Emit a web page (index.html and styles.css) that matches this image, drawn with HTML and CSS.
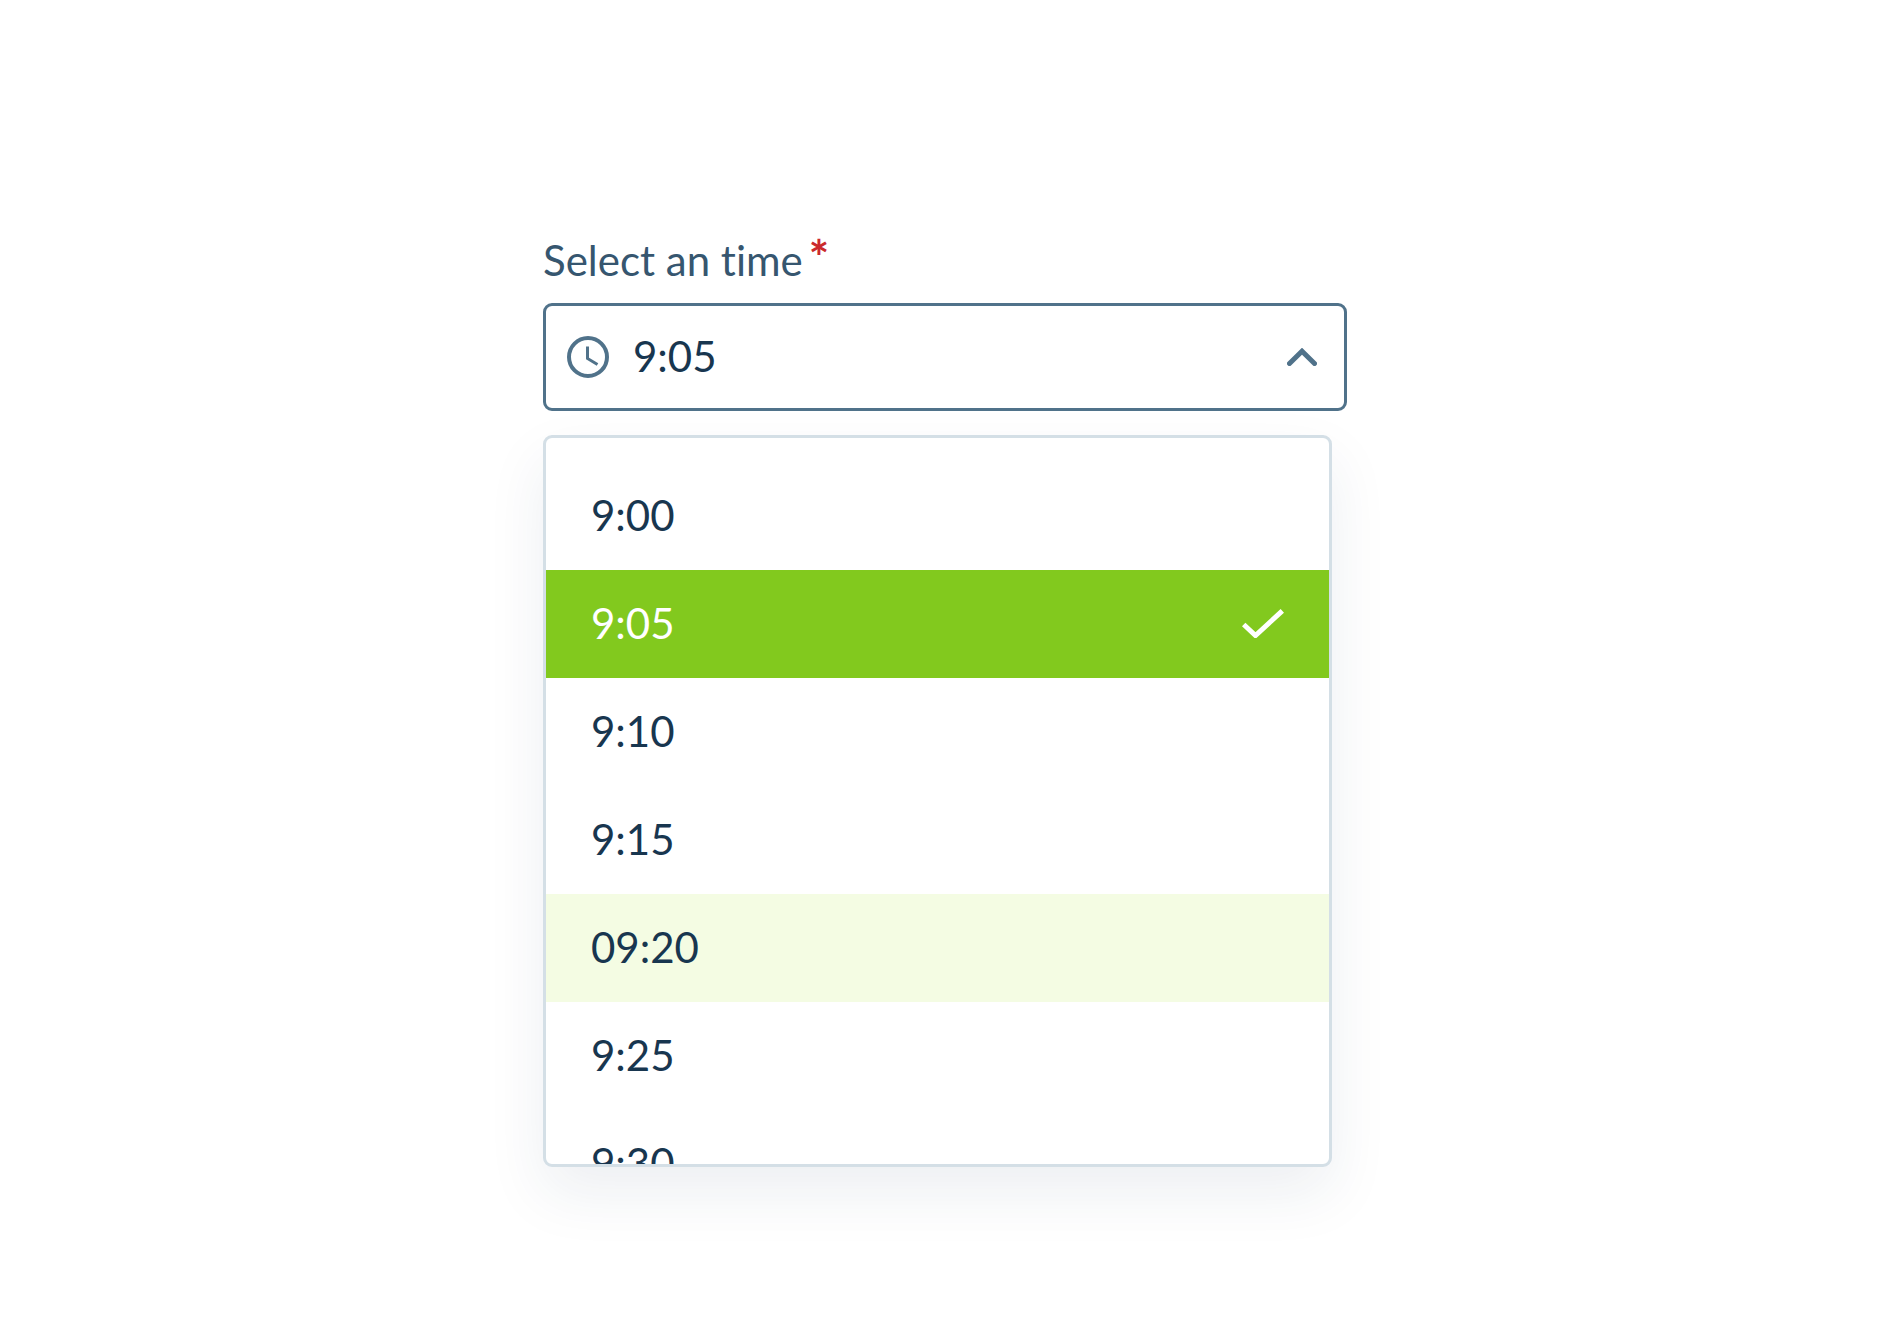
FILE: index.html
```html
<!DOCTYPE html>
<html lang="en">
<head>
<meta charset="utf-8">
<meta name="viewport" content="width=device-width, initial-scale=1">
<title>Time select</title>
<link rel="stylesheet" href="styles.css">
</head>
<body>
<main class="time-select">
  <label class="label" for="time">Select an time <span class="required">*</span></label>
  <div class="field">
    <svg class="clock" viewBox="0 0 42 42" aria-hidden="true">
      <circle cx="21" cy="21" r="19"/>
      <path class="hands" d="M20.500 10.500V22.500L30.500 28.500"/>
    </svg>
    <input class="value" id="time" type="text" value="9:05" role="combobox" aria-expanded="true" aria-controls="times" required>
    <button class="toggle" type="button" aria-label="Close list">
      <svg class="chevron" viewBox="0 0 30 18" aria-hidden="true"><path d="M2.500 15.500L15 3.200L27.500 15.500"/></svg>
    </button>
  </div>
  <div class="list" id="times" role="listbox" aria-label="Times">
    <button class="option" type="button" role="option">9:00</button>
    <button class="option selected" type="button" role="option" aria-selected="true">9:05
      <svg class="check" viewBox="0 0 42 30" aria-hidden="true"><path d="M1.700 16.500L13.500 27.500L40.300 2.900"/></svg>
    </button>
    <button class="option" type="button" role="option">9:10</button>
    <button class="option" type="button" role="option">9:15</button>
    <button class="option active" type="button" role="option">09:20</button>
    <button class="option" type="button" role="option">9:25</button>
    <button class="option" type="button" role="option">9:30</button>
  </div>
</main>
</body>
</html>
```
FILE: styles.css
```css
* {
  box-sizing: border-box;
}

body {
  margin: 0;
  background: #fff;
  color: #18364f;
  font-family: Lato, sans-serif;
  font-size: 42px;
  font-variant-ligatures: none;
  line-height: 54px;
}

button,
input {
  margin: 0;
  padding: 0;
  border: 0;
  background: none;
  color: inherit;
  font: inherit;
  font-variant-ligatures: none;
}

button {
  cursor: pointer;
}

svg {
  display: block;
  flex: none;
  fill: none;
}

.time-select {
  display: flex;
  flex-direction: column;
  max-width: 804px;
  margin: 0 auto;
  padding: 233px 0 96px;
}

.label {
  display: flex;
  gap: 6px;
  margin-bottom: 16px;
  color: #36566f;
}

.required {
  color: #cb2a2c;
  font-size: 48px;
  font-weight: 700;
  line-height: 48px;
}

.field {
  display: flex;
  align-items: center;
  height: 108px;
  padding: 0 27px 0 21px;
  border: 3px solid #50728a;
  border-radius: 9px;
  background: #fff;
}

.clock {
  width: 42px;
  height: 42px;
  margin-right: 24px;
  stroke: #50728a;
  stroke-width: 4;
}

.hands {
  stroke-width: 3;
}

.value {
  flex: 1;
  min-width: 0;
  padding-bottom: 2px;
  outline: 0;
}

.chevron {
  width: 30px;
  height: 18px;
  stroke: #50728a;
  stroke-width: 5;
  stroke-linecap: round;
}

.list {
  height: 732px;
  margin: 24px 15px 0 0;
  padding-top: 24px;
  overflow: hidden;
  border: 3px solid #d4dfe6;
  border-radius: 9px;
  background: #fff;
  box-shadow: 0 26px 60px rgba(24, 48, 84, 0.08);
}

.option {
  display: flex;
  align-items: center;
  justify-content: space-between;
  width: 100%;
  height: 108px;
  padding: 0 45px 2px;
  text-align: left;
}

.selected {
  background: #82c91e;
  color: #fff;
}

.active {
  background: #f4fce3;
}

.check {
  width: 42px;
  height: 30px;
  stroke: #fff;
  stroke-width: 5;
}
```
